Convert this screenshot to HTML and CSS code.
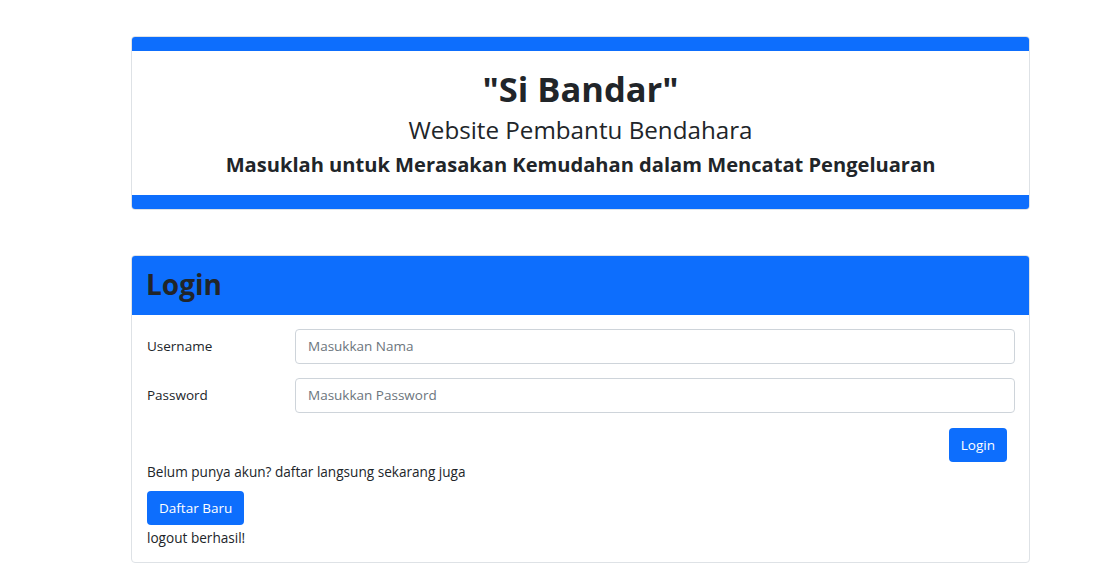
FILE: index.html
```html
<!DOCTYPE html>
<html lang="id">
<head>
<meta charset="utf-8">
<title>Si Bandar</title>
<link rel="stylesheet" href="styles.css">
</head>
<body>
<main class="wrap">
  <section class="hero">
    <div class="bar"></div>
    <div class="hero-body">
      <h1 class="title">"Si Bandar"</h1>
      <h3 class="subtitle">Website Pembantu Bendahara</h3>
      <h4 class="tagline">Masuklah untuk Merasakan Kemudahan dalam Mencatat Pengeluaran</h4>
    </div>
    <div class="bar"></div>
  </section>

  <section class="card">
    <div class="card-header"><h3 class="card-title">Login</h3></div>
    <div class="card-body">
      <form class="form">
        <div class="row">
          <label class="label" for="u">Username</label>
          <input class="input" id="u" type="text" placeholder="Masukkan Nama">
        </div>
        <div class="row">
          <label class="label" for="p">Password</label>
          <input class="input" id="p" type="password" placeholder="Masukkan Password">
        </div>
        <div class="actions"><button class="btn" type="button">Login</button></div>
      </form>
      <p class="text">Belum punya akun? daftar langsung sekarang juga</p>
      <button class="btn" type="button">Daftar Baru</button>
      <p class="text msg">logout berhasil!</p>
    </div>
  </section>
</main>
</body>
</html>
```
FILE: styles.css
```css
* { box-sizing: border-box; }
body {
  margin: 0;
  background: #fff;
  color: #212529;
  font-family: "Open Sans", "Noto Sans", sans-serif;
  font-size: 14px;
  line-height: 1.5;
}
.wrap {
  width: 899px;
  margin-left: 131px;
  padding-top: 36px;
}
.hero {
  border: 1px solid #dee2e6;
  border-radius: 4px;
  overflow: hidden;
}
.bar {
  height: 15px;
  margin: -1px -1px 0;
  background: #0d6efd;
}
.hero .bar:last-child { margin: 0 -1px -1px; }
.hero-body {
  text-align: center;
  padding: 17px 0 16px;
}
.title {
  margin: 0;
  font-size: 34.5px;
  font-weight: 700;
  line-height: 1.2;
}
.subtitle {
  margin: 5px 0 0;
  font-size: 24.2px;
  font-weight: 400;
  line-height: 1.3;
}
.tagline {
  margin: 5px 0 0;
  font-size: 20.1px;
  font-weight: 700;
  line-height: 1.4;
}
.card {
  margin-top: 45px;
  border: 1px solid #dee2e6;
  border-radius: 4px;
  overflow: hidden;
}
.card-header {
  background: #0d6efd;
  padding: 9px 15px 11px;
  margin: -1px -1px 0;
}
.card-title {
  margin: 0;
  font-size: 28px;
  font-weight: 700;
  line-height: 40px;
}
.card-body {
  padding: 14px 14px 13px 15px;
}
.row {
  display: grid;
  grid-template-columns: 148px 1fr;
  align-items: center;
  margin-bottom: 14px;
}
.label { font-size: 13.5px; }
.input {
  height: 35px;
  padding: 6px 12px;
  border: 1px solid #ced4da;
  border-radius: 4px;
  font: inherit;
  font-size: 13.5px;
  color: #212529;
}
.input::placeholder { color: #6c757d; }
.actions {
  display: flex;
  justify-content: flex-end;
  padding-right: 8px;
  margin-top: 15px;
}
.btn {
  height: 34px;
  padding: 0 12px;
  border: 0;
  border-radius: 4px;
  background: #0d6efd;
  color: #fff;
  font: inherit;
  font-size: 13.5px;
}
.text {
  margin: 0 0 9px;
  font-size: 13.6px;
}
.msg { margin: 3px 0 0; }
```
